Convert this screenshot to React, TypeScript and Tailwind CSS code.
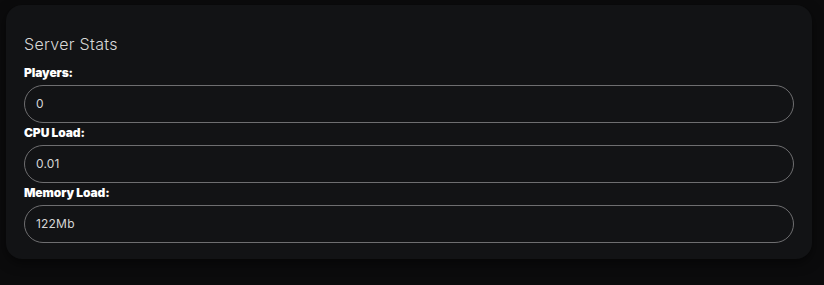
import React from "react";

const stats = [
  { label: "Players:", value: "0" },
  { label: "CPU Load:", value: "0.01" },
  { label: "Memory Load:", value: "122Mb" },
];

export default function App() {
  return (
    <main
      className="min-h-[285px] w-full bg-[#0b0b0c] pl-[6px] pr-[12px] pt-[5px]"
      style={{ fontFamily: "Inter, Lato, sans-serif" }}
    >
      <section className="rounded-[16px] bg-[#121315] px-[18px] pb-[16px] pt-[29px] shadow-[0_4px_12px_rgba(0,0,0,0.5)]">
        <h2 className="text-[16px] font-light leading-[20px] tracking-[0.3px] text-[#d8d8d8]">
          Server Stats
        </h2>
        <div className="mt-[10px] flex flex-col gap-[1px]">
          {stats.map((s) => (
            <div key={s.label} className="flex flex-col">
              <label className="flex h-[18px] items-center text-[12px] font-black tracking-[-0.1px] text-white">
                {s.label}
              </label>
              <div className="mt-[3px] flex h-[38px] items-center rounded-full border border-[#6e6e70] px-[11px] text-[12px] tracking-[0.2px] text-[#d6d6d6]">
                {s.value}
              </div>
            </div>
          ))}
        </div>
      </section>
    </main>
  );
}
